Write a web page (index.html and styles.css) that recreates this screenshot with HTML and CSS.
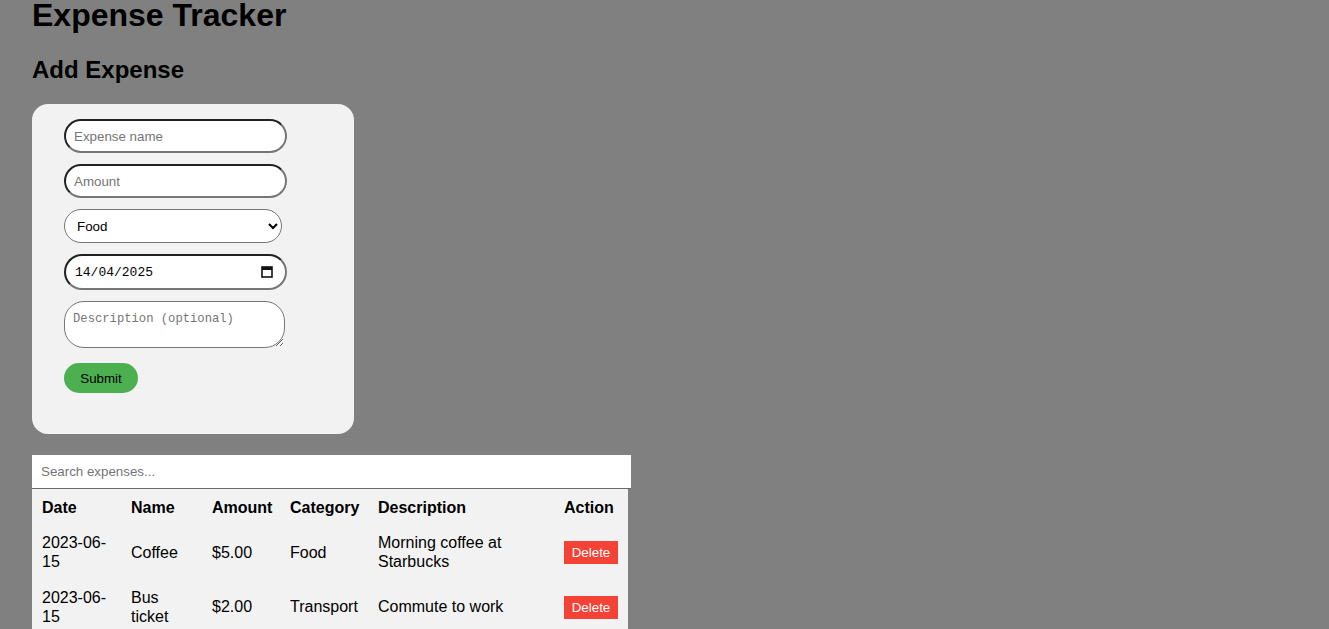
FILE: index.html
```html
<!DOCTYPE html>
<html lang="en">
<head>
<meta charset="utf-8">
<title>Expense Tracker</title>
<link rel="stylesheet" href="styles.css">
</head>
<body>
<h1 class="title">Expense Tracker</h1>
<h2 class="subtitle">Add Expense</h2>
<form class="card">
  <input class="field" type="text" placeholder="Expense name">
  <input class="field" type="text" placeholder="Amount">
  <select class="field select">
    <option>Food</option>
    <option>Transport</option>
    <option>Entertainment</option>
    <option>Other</option>
  </select>
  <div class="date-wrap">
    <input class="field date" type="text" value="14/04/2025">
    <svg class="cal" width="12" height="12" viewBox="0 0 12 12" aria-hidden="true">
      <rect x="1" y="1" width="10" height="10" fill="none" stroke="#111" stroke-width="1.6"/>
      <rect x="1" y="1" width="10" height="3" fill="#111"/>
    </svg>
  </div>
  <textarea class="field area" placeholder="Description (optional)"></textarea>
  <button class="submit" type="button">Submit</button>
</form>
<input class="search" type="text" placeholder="Search expenses...">
<table class="expenses">
  <colgroup>
    <col class="c-date"><col class="c-name"><col class="c-amount"><col class="c-cat"><col class="c-desc"><col class="c-action">
  </colgroup>
  <thead>
    <tr><th>Date</th><th>Name</th><th>Amount</th><th>Category</th><th>Description</th><th>Action</th></tr>
  </thead>
  <tbody>
    <tr><td>2023-06-15</td><td>Coffee</td><td>$5.00</td><td>Food</td><td>Morning coffee at Starbucks</td><td><button class="del" type="button">Delete</button></td></tr>
    <tr><td>2023-06-15</td><td>Bus ticket</td><td>$2.00</td><td>Transport</td><td>Commute to work</td><td><button class="del" type="button">Delete</button></td></tr>
  </tbody>
</table>
</body>
</html>
```
FILE: styles.css
```css
html, body {
  margin: 0;
  padding: 0;
}
body {
  background: #808080;
  font-family: "Liberation Sans", Arial, sans-serif;
  color: #000;
  padding: 0 32px;
}
.title {
  margin: 0;
  font-size: 32px;
  line-height: 30px;
}
.subtitle {
  margin: 26px 0 20px;
  font-size: 24px;
  line-height: 28px;
}
.card {
  width: 322px;
  box-sizing: border-box;
  background: #f2f2f2;
  border-radius: 16px;
  padding: 15px 32px 41px;
  display: flex;
  flex-direction: column;
  align-items: flex-start;
  gap: 11px;
}
.field {
  box-sizing: border-box;
  width: 223px;
  height: 34px;
  border: 2px inset #767676;
  border-radius: 18px;
  padding: 0 8px;
  background: #fff;
  font-family: "Liberation Sans", Arial, sans-serif;
  font-size: 13.33px;
  color: #000;
  margin: 0;
  outline: none;
}
.field::placeholder {
  color: #757575;
}
.select {
  width: 218px;
  border: 1px solid #767676;
  padding: 0 6px 0 8px;
}
.date-wrap {
  position: relative;
  width: 223px;
  height: 36px;
}
.date {
  height: 36px;
  font-family: "Liberation Mono", "DejaVu Sans Mono", monospace;
  font-size: 13px;
  padding-left: 9px;
}
.cal {
  position: absolute;
  right: 14px;
  top: 12px;
}
.area {
  width: 221px;
  height: 47px;
  border: 1px solid #767676;
  border-radius: 20px;
  padding: 9px 8px 6px;
  font-family: "Liberation Mono", "DejaVu Sans Mono", monospace;
  font-size: 12.2px;
  line-height: 16px;
  resize: vertical;
}
.submit {
  margin-top: 4px;
  width: 74px;
  height: 30px;
  border: none;
  border-radius: 15px;
  background: #4caf50;
  color: #000;
  font-family: "Liberation Sans", Arial, sans-serif;
  font-size: 13.33px;
  padding: 0;
}
.search {
  display: block;
  box-sizing: border-box;
  width: 599px;
  height: 34px;
  margin: 21px 0 0;
  padding: 0 9px;
  border: none;
  border-bottom: 1px solid #6a6a6a;
  background: #fff;
  font-family: "Liberation Sans", Arial, sans-serif;
  font-size: 13.33px;
  outline: none;
}
.search::placeholder {
  color: #757575;
}
.expenses {
  width: 596px;
  table-layout: fixed;
  background: #f2f2f2;
  border-spacing: 2px;
  font-size: 16px;
}
.c-date { width: 87px; }
.c-name { width: 79px; }
.c-amount { width: 76px; }
.c-cat { width: 86px; }
.c-desc { width: 184px; }
.c-action { width: 70px; }
.expenses th,
.expenses td {
  padding: 8px;
  text-align: left;
  vertical-align: middle;
  line-height: 18.4px;
}
.expenses th {
  padding-bottom: 7px;
}
.del {
  background: #f44336;
  color: #fff;
  border: none;
  width: 54px;
  padding: 0;
  height: 23px;
  font-family: "Liberation Sans", Arial, sans-serif;
  font-size: 13.33px;
}
```
